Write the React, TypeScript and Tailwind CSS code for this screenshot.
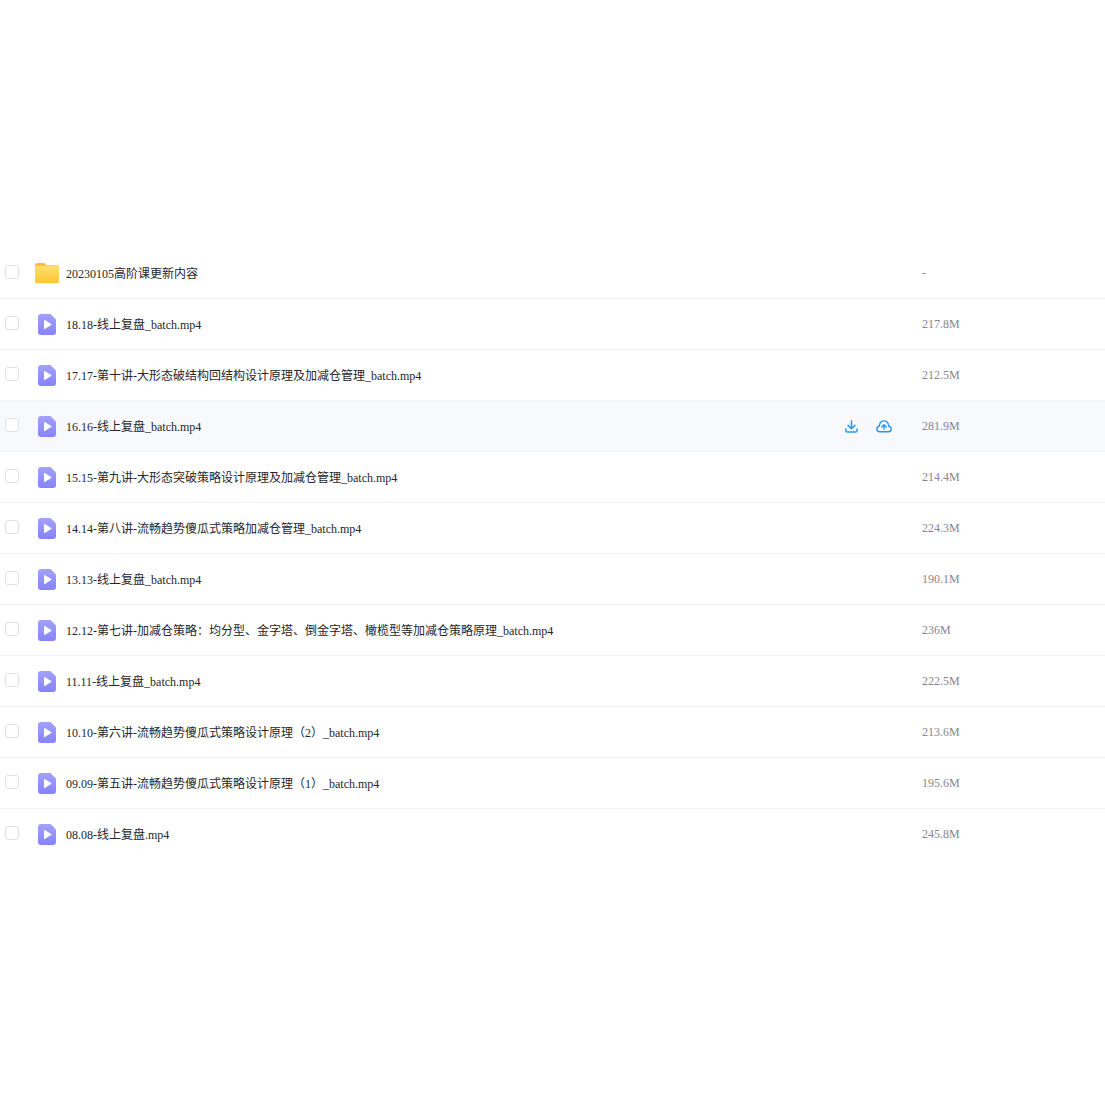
import React from 'react';

interface FileRow {
  name: string;
  size: string;
  folder?: boolean;
  hover?: boolean;
}

const files: FileRow[] = [
  { name: '20230105高阶课更新内容', size: '-', folder: true },
  { name: '18.18-线上复盘_batch.mp4', size: '217.8M' },
  { name: '17.17-第十讲-大形态破结构回结构设计原理及加减仓管理_batch.mp4', size: '212.5M' },
  { name: '16.16-线上复盘_batch.mp4', size: '281.9M', hover: true },
  { name: '15.15-第九讲-大形态突破策略设计原理及加减仓管理_batch.mp4', size: '214.4M' },
  { name: '14.14-第八讲-流畅趋势傻瓜式策略加减仓管理_batch.mp4', size: '224.3M' },
  { name: '13.13-线上复盘_batch.mp4', size: '190.1M' },
  { name: '12.12-第七讲-加减仓策略：均分型、金字塔、倒金字塔、橄榄型等加减仓策略原理_batch.mp4', size: '236M' },
  { name: '11.11-线上复盘_batch.mp4', size: '222.5M' },
  { name: '10.10-第六讲-流畅趋势傻瓜式策略设计原理（2）_batch.mp4', size: '213.6M' },
  { name: '09.09-第五讲-流畅趋势傻瓜式策略设计原理（1）_batch.mp4', size: '195.6M' },
  { name: '08.08-线上复盘.mp4', size: '245.8M' },
];

function FolderIcon() {
  return (
    <svg width="26" height="22" viewBox="0 0 26 22" className="block">
      <defs>
        <linearGradient id="folderFront" x1="0" y1="0" x2="0" y2="1">
          <stop offset="0" stopColor="#ffdf70" />
          <stop offset="1" stopColor="#ffc533" />
        </linearGradient>
      </defs>
      <path d="M1 3.500C1 1.800 1.800 1 3.500 1h6c1 0 1.600.4 2.200 1.200l.8 1h10c1.700 0 2.500.8 2.500 2.300V8H1z" fill="#fbbd30" />
      <path d="M2.500 3.700h21c1 0 1.500.5 1.500 1.500V19c0 1.500-.8 2.300-2.300 2.300H3.300C1.800 21.300 1 20.500 1 19V5.200c0-1 .5-1.500 1.500-1.500z" fill="url(#folderFront)" />
    </svg>
  );
}

function VideoIcon() {
  return (
    <svg width="18" height="21" viewBox="0 0 18 21" className="block">
      <defs>
        <linearGradient id="videoBody" x1="0" y1="0" x2="0" y2="1">
          <stop offset="0" stopColor="#a3a1fc" />
          <stop offset="1" stopColor="#8583fa" />
        </linearGradient>
      </defs>
      <path d="M3 0h9.500L18 5.500V18c0 2-1 3-3 3H3c-2 0-3-1-3-3V3c0-2 1-3 3-3z" fill="url(#videoBody)" />
      <path d="M6 6.600v7.800c0 .5.400.7.800.5l6.400-3.900c.4-.2.4-.7 0-1L6.800 6.100c-.4-.2-.8 0-.8.500z" fill="#fff" />
    </svg>
  );
}

function DownloadIcon() {
  return (
    <svg width="13" height="13" viewBox="0 0 13 13" fill="none" stroke="#2b96e8" strokeWidth="1.500" className="block">
      <path d="M6.500.8v8M3 5.400l3.500 3.400L10 5.400" strokeLinecap="round" strokeLinejoin="round" />
      <path d="M.9 9v1.500c0 1 .6 1.600 1.600 1.600h8c1 0 1.600-.6 1.600-1.600V9" strokeLinecap="round" />
    </svg>
  );
}

function CloudIcon() {
  return (
    <svg width="16" height="13" viewBox="0 0 16 13" fill="none" stroke="#2b96e8" strokeWidth="1.400" className="block">
      <path d="M3.600 11.800C1.900 11.800.8 10.600.8 9c0-1.500 1-2.600 2.400-2.800C3.600 3 5.500.9 8 .9s4.400 2.100 4.800 5.300c1.400.2 2.400 1.300 2.400 2.800 0 1.600-1.100 2.800-2.800 2.800z" strokeLinejoin="round" />
      <path d="M8 4.800v4.400M5.800 7 8 4.800 10.200 7" strokeLinecap="round" strokeLinejoin="round" />
    </svg>
  );
}

export default function App() {
  return (
    <div className="min-h-[1105px] bg-white pt-[248px] font-['Liberation_Serif','Noto_Sans_CJK_SC',serif] text-[12px]">
      {files.map((file, i) => (
        <div
          key={file.name}
          className={`flex h-[51px] items-center border-b ${i < files.length - 1 ? 'border-[#f1f2f4]' : 'border-transparent'} ${file.hover ? 'bg-[#f7f9fc]' : 'bg-white'}`}
        >
          <div className="mb-[3px] ml-[5px] h-[14px] w-[14px] rounded-[3px] border border-[#dfe0e3] bg-white" />
          <div className="flex w-[47px] justify-center pl-[9px]">
            {file.folder ? <FolderIcon /> : <VideoIcon />}
          </div>
          <div className="min-w-0 flex-1 pt-[2px] text-[#25262b]">{file.name}</div>
          {file.hover && (
            <div className="flex items-center gap-[18px] pr-[30px]">
              <DownloadIcon />
              <CloudIcon />
            </div>
          )}
          <div className="w-[183px] text-[#858692]">{file.size}</div>
        </div>
      ))}
    </div>
  );
}
